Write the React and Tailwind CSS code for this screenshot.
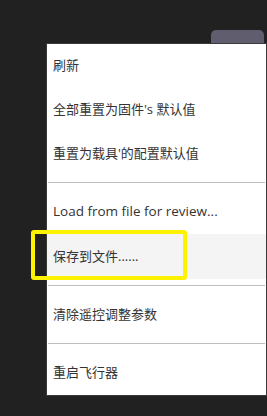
import React from "react";

function Item({ children, h = "h-[44px]", hl = false, size = "text-[13px]" }) {
  return (
    <div
      className={`${h} flex items-center pl-[6px] ${size} text-[#333333] ${hl ? "bg-[#f4f4f4]" : ""}`}
      style={{ fontFamily: '"Open Sans", "Noto Sans CJK SC", sans-serif' }}
    >
      {children}
    </div>
  );
}

function Sep({ cls }) {
  return <div className={`h-px bg-[#bdbdbd] ml-[1px] mr-[1px] ${cls}`} />;
}

export default function App() {
  return (
    <div className="relative w-[267px] h-[416px] bg-[#212121] overflow-hidden">
      <div className="flex justify-end pt-[30px] pr-[3px]">
        <div className="w-[53px] h-[13px] bg-[#5f5d6e] rounded-t-[5px]" />
      </div>
      <div className="ml-[46px] w-[221px] bg-white border border-[#3a3a3a]">
        <Item>刷新</Item>
        <Item>全部重置为固件's 默认值</Item>
        <Item>重置为载具'的配置默认值</Item>
        <Sep cls="mt-[6px] mb-[6px]" />
        <Item h="h-[45px]" size="text-[13.5px]">Load from file for review...</Item>
        <Item h="h-[45px]" hl>保存到文件......</Item>
        <Sep cls="mt-[6px] mb-[7px]" />
        <Item h="h-[43px]">清除遥控调整参数</Item>
        <Sep cls="mt-[7px] mb-[7px]" />
        <Item>重启飞行器</Item>
      </div>
      <div className="absolute left-[31px] top-[230px] w-[156px] h-[50px] border-4 border-[#fff200] rounded-[3px]" />
    </div>
  );
}
